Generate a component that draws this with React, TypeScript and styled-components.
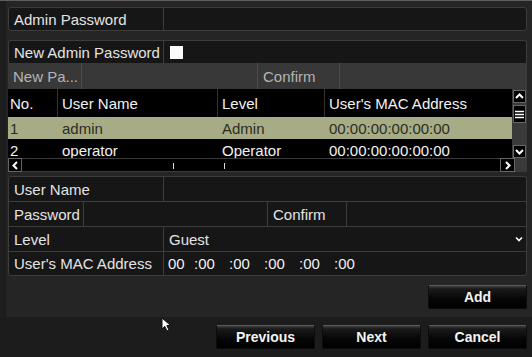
import React from "react"
import styled, { createGlobalStyle } from "styled-components"

const GlobalStyle = createGlobalStyle`
  html, body {
    margin: 0;
    padding: 0;
    background: #1c1c1c;
  }
  body {
    font-family: "Liberation Sans", Arial, sans-serif;
  }
`

const Screen = styled.div`
  position: relative;
  width: 532px;
  height: 357px;
  box-sizing: border-box;
  display: flex;
  flex-direction: column;
  overflow: hidden;
  background: #252525;
  border-top: 1px solid #5e5e5e;
  box-shadow: inset 6px 0 0 #1d1d1d;
`

const Panel = styled.div`
  flex: 1;
  display: flex;
  flex-direction: column;
  padding: 6px 5px 0 8px;
`

const Group = styled.div<{ $gap?: number; $open?: boolean }>`
  border: 1px solid #3d3d3d;
  border-radius: ${p => (p.$open ? "3px 3px 0 0" : "3px")};
  ${p => p.$open && "border-bottom: none;"}
  background: #161616;
  overflow: hidden;
  margin-top: ${p => p.$gap ?? 0}px;
`

const Row = styled.div<{ $h?: number }>`
  display: flex;
  height: ${p => p.$h ?? 24}px;
  color: #e4e4e4;
  & + & {
    border-top: 1px solid #3d3d3d;
  }
`

const Cell = styled.div<{ $w?: number }>`
  box-sizing: border-box;
  display: flex;
  align-items: center;
  padding: 0 5px;
  font-size: 15px;
  white-space: nowrap;
  ${p => (p.$w ? `width: ${p.$w}px; border-right: 1px solid #3d3d3d;` : "flex: 1;")}
`

const MutedBand = styled.div`
  display: flex;
  height: 26px;
  background: #383838;
  color: #b4b4b4;

  ${Cell} {
    border-color: #4c4c4c;
  }
`

const Check = styled.span`
  width: 13px;
  height: 13px;
  background: #fafafa;
  margin-left: 1px;
`

const Table = styled.div`
  display: flex;
  flex-direction: column;
  background: #3a3a3a;
`

const TableTop = styled.div`
  display: flex;
  height: 69px;
`

const Viewport = styled.div`
  flex: 1;
  overflow: hidden;
  background: #000;
`

const TRow = styled.div<{ $head?: boolean; $sel?: boolean }>`
  display: grid;
  grid-template-columns: 50px 160px 107px 1fr;
  height: ${p => (p.$head ? 28 : 22)}px;
  background: ${p => (p.$sel ? "#a8ac86" : "#000")};
  color: ${p => (p.$sel ? "#2a2e1c" : "#f2f2f2")};
  font-size: 15px;
  line-height: 15px;
`

const TCell = styled.div<{ $head?: boolean }>`
  display: flex;
  align-items: center;
  padding: 0 4px;
  white-space: nowrap;
  overflow: hidden;
  border-right: ${p => (p.$head ? "1px solid #333" : "none")};
  &:first-child {
    padding-left: 2px;
  }
  &:last-child {
    border-right: none;
  }
`

const VScroll = styled.div`
  width: 15px;
  display: flex;
  flex-direction: column;
  align-items: center;
  padding-top: 1px;
  gap: 2px;
`

const ScrollBtn = styled.div<{ $w?: number; $h?: number }>`
  width: ${p => p.$w ?? 13}px;
  height: ${p => p.$h ?? 13}px;
  box-sizing: border-box;
  background: #000;
  border: 1px solid #666;
  display: flex;
  align-items: center;
  justify-content: center;
`

const Spacer = styled.div`
  flex: 1;
`

const HScroll = styled.div`
  display: flex;
  height: 14px;
`

const Track = styled.div`
  flex: 1;
  background: #000;
  position: relative;
  margin-top: 1px;
  height: 12px;
`

const Tick = styled.span`
  position: absolute;
  top: 4px;
  width: 1px;
  height: 6px;
  background: #ddd;
`

const Filler = styled.div`
  width: 12px;
`

const MacFields = styled.div`
  display: flex;
  align-items: center;
  padding-left: 4px;
  font-size: 15px;
  color: #f0f0f0;
`

const MacPart = styled.span<{ $w: number }>`
  width: ${p => p.$w}px;
  white-space: pre;
`

const ActionRow = styled.div`
  display: flex;
  justify-content: flex-end;
  margin-top: 9px;
`

const Button = styled.button`
  width: 99px;
  height: 24px;
  box-sizing: border-box;
  border: 1px solid #0c0c0c;
  border-top-color: #5a5a5a;
  border-radius: 2px;
  background: linear-gradient(#3c3c3c 0, #1a1a1a 3px, #050505 60%, #000 100%);
  color: #f4f4f4;
  font-family: "Liberation Sans", Arial, sans-serif;
  font-size: 14px;
  font-weight: bold;
  padding: 0;
`

const Footer = styled.div`
  height: 40px;
  box-sizing: border-box;
  background: #1c1c1c;
  display: flex;
  justify-content: flex-end;
  gap: 7px;
  padding: 8px 5px 0 0;
`

const Cursor = styled.svg`
  position: absolute;
  left: 161px;
  top: 316px;
`

const Chevron = ({ dir }: { dir: "up" | "down" | "left" | "right" }) => {
  const paths = {
    up: "M2 7 L5.5 3.5 L9 7",
    down: "M2 4 L5.5 7.5 L9 4",
    left: "M7 2 L3.5 5.5 L7 9",
    right: "M4 2 L7.5 5.5 L4 9",
  }
  return (
    <svg width="11" height="11" viewBox="0 0 11 11">
      <path d={paths[dir]} fill="none" stroke="#fff" strokeWidth="2" />
    </svg>
  )
}

const users = [
  { no: "1", name: "admin", level: "Admin", mac: "00:00:00:00:00:00" },
  { no: "2", name: "operator", level: "Operator", mac: "00:00:00:00:00:00" },
]

const macParts = ["00", ":00", ":00", ":00", ":00", ":00"]

const App = (): JSX.Element => {
  return (
    <Screen>
      <GlobalStyle />
      <Panel>
        <Group>
          <Row $h={22}>
            <Cell $w={155}>Admin Password</Cell>
            <Cell />
          </Row>
        </Group>

        <Group $gap={9} $open>
          <Row $h={22}>
            <Cell $w={155}>New Admin Password</Cell>
            <Cell><Check /></Cell>
          </Row>
        </Group>
        <MutedBand>
          <Cell $w={74}>New Pa...</Cell>
          <Cell $w={176} />
          <Cell $w={82}>Confirm</Cell>
          <Cell />
        </MutedBand>

        <Table>
          <TableTop>
            <Viewport>
              <TRow $head>
                <TCell $head>No.</TCell>
                <TCell $head>User Name</TCell>
                <TCell $head>Level</TCell>
                <TCell $head>User's MAC Address</TCell>
              </TRow>
              {users.map((u, i) => (
                <TRow key={u.no} $sel={i === 0}>
                  <TCell>{u.no}</TCell>
                  <TCell>{u.name}</TCell>
                  <TCell>{u.level}</TCell>
                  <TCell>{u.mac}</TCell>
                </TRow>
              ))}
            </Viewport>
            <VScroll>
              <ScrollBtn><Chevron dir="up" /></ScrollBtn>
              <ScrollBtn $h={18}>
                <svg width="9" height="9" viewBox="0 0 9 9">
                  <path d="M0 1.5 H9 M0 4.5 H9 M0 7.5 H9" stroke="#fff" strokeWidth="1.4" />
                </svg>
              </ScrollBtn>
              <Spacer />
              <ScrollBtn><Chevron dir="down" /></ScrollBtn>
            </VScroll>
          </TableTop>
          <HScroll>
            <ScrollBtn $w={14} $h={14}><Chevron dir="left" /></ScrollBtn>
            <Track>
              <Tick style={{ left: 151 }} />
              <Tick style={{ left: 202 }} />
            </Track>
            <ScrollBtn $w={15} $h={14}><Chevron dir="right" /></ScrollBtn>
            <Filler />
          </HScroll>
        </Table>

        <Group $gap={4}>
          <Row>
            <Cell $w={155}>User Name</Cell>
            <Cell />
          </Row>
          <Row>
            <Cell $w={75}>Password</Cell>
            <Cell $w={184} />
            <Cell $w={79}>Confirm</Cell>
            <Cell />
          </Row>
          <Row>
            <Cell $w={155}>Level</Cell>
            <Cell style={{ justifyContent: "space-between", paddingRight: 3 }}>
              Guest
              <svg width="8" height="6" viewBox="0 0 8 6">
                <path d="M1 1.5 L4 4.5 L7 1.5" fill="none" stroke="#fff" strokeWidth="1.6" />
              </svg>
            </Cell>
          </Row>
          <Row $h={23}>
            <Cell $w={155}>User's MAC Address</Cell>
            <MacFields>
              {macParts.map((m, i) => (
                <MacPart key={i} $w={i === 0 ? 26 : 35}>{m}</MacPart>
              ))}
            </MacFields>
          </Row>
        </Group>

        <ActionRow>
          <Button>Add</Button>
        </ActionRow>
      </Panel>

      <Footer>
        <Button>Previous</Button>
        <Button>Next</Button>
        <Button>Cancel</Button>
      </Footer>

      <Cursor width="12" height="16" viewBox="0 0 12 16">
        <path d="M1 1 L1 12 L3.8 9.4 L6 14 L8 13 L5.8 8.6 L9.5 8.4 Z" fill="#fff" stroke="#111" strokeWidth="1" />
      </Cursor>
    </Screen>
  )
}

export default App
